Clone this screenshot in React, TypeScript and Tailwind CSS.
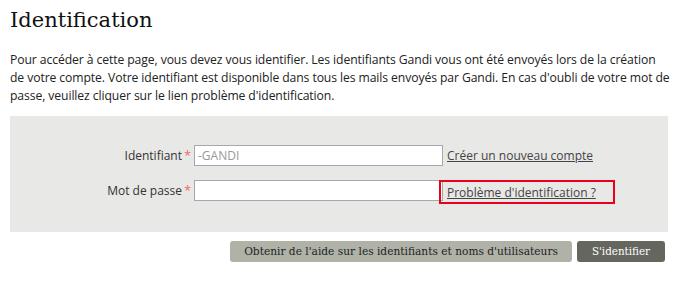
import React from 'react';

const slab = { fontFamily: '"DejaVu Serif Condensed", "DejaVu Serif", serif' };
const title = { fontFamily: '"DejaVu Serif", serif' };

export default function App() {
  return (
    <div className="w-[689px] h-[282px] bg-white text-[#333] font-['Open_Sans',sans-serif]">
      <div className="pl-[10px] pr-[8px] pt-[7px]">
        <h1 style={title} className="text-[21px] leading-[26px] text-[#111] m-0">Identification</h1>
        <p className="mt-[18px] text-[12.2px] leading-[18px] text-[#222] whitespace-nowrap tracking-[-0.1px]">
          Pour accéder à cette page, vous devez vous identifier. Les identifiants Gandi vous ont été envoyés lors de la création
          <br />
          de votre compte. Votre identifiant est disponible dans tous les mails envoyés par Gandi. En cas d'oubli de votre mot de
          <br />
          passe, veuillez cliquer sur le lien problème d'identification.
        </p>

        <div className="mt-[11px] w-[658px] h-[116px] bg-[#e8e8e6] pt-[29px]">
          <div className="flex items-center h-[21px]">
            <label className="w-[172px] text-right text-[12px] text-[#333]">Identifiant</label>
            <span className="w-[12px] pl-[2px] text-[#f26b6b] text-[13px]">*</span>
            <input
              defaultValue="-GANDI"
              className="w-[249px] h-[21px] bg-white border border-[#a5a9ae] px-[3px] text-[12px] text-[#999] outline-none"
            />
            <a className="ml-[4px] text-[12px] text-[#444] underline">Créer un nouveau compte</a>
          </div>
          <div className="flex items-center h-[21px] mt-[14px]">
            <label className="w-[172px] text-right text-[12px] text-[#333]">Mot de passe</label>
            <span className="w-[12px] pl-[2px] text-[#f26b6b] text-[13px]">*</span>
            <input
              type="password"
              className="w-[249px] h-[21px] bg-white border border-[#a5a9ae] px-[3px] text-[12px] outline-none"
            />
            <div className="relative">
              <a className="ml-[4px] text-[12px] text-[#444] underline">Problème d'identification ?</a>
              <div className="absolute left-[-4px] top-[1px] w-[176px] h-[24px] border-2 border-[#e8001c]" />
            </div>
          </div>
        </div>

        <div className="flex justify-end gap-[5px] mt-[9px] w-[655px]">
          <button style={slab} className="h-[21px] px-[14px] rounded-[3px] bg-[#b0b2a8] text-[#222] text-[11.8px]">
            Obtenir de l'aide sur les identifiants et noms d'utilisateurs
          </button>
          <button style={slab} className="h-[21px] px-[15px] rounded-[3px] bg-[#65665e] text-white text-[11.5px]">
            S'identifier
          </button>
        </div>
      </div>
    </div>
  );
}
